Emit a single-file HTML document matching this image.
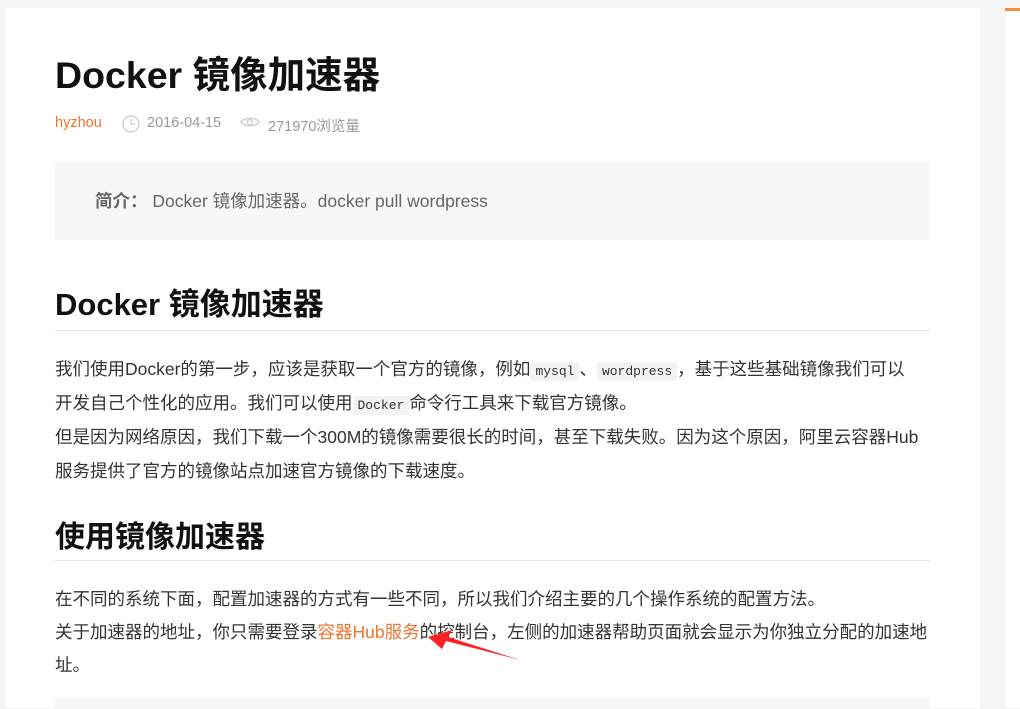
<!DOCTYPE html>
<html><head><meta charset="utf-8"><style>
body{margin:0;width:1020px;height:706px;background:#f5f5f5;overflow:hidden;position:relative;font-family:"Liberation Sans","Noto Sans CJK SC",sans-serif;color:#222}
.card{position:absolute;left:5px;top:8px;width:975px;height:700px;background:#fff}
.side{position:absolute;left:1005px;top:8px;width:15px;height:700px;background:#fff;border-top:3px solid #f08c3c;box-sizing:border-box}
.a{position:absolute;white-space:nowrap}
h1,h2{margin:0;font-weight:bold;color:#111}
.t{font-size:17.5px;color:#333}
code{font-family:"Liberation Mono",monospace;font-size:13px;background:#f3f3f3;padding:2px 5px;border-radius:3px;color:#333}
.rule{position:absolute;left:55px;width:875px;height:1px;background:#e6e6e6}
</style></head><body>
<div class="card"></div><div class="side"></div>
<h1 class="a" style="left:55px;top:44px;font-size:37.5px">Docker 镜像加速器</h1>
<div class="a" style="left:55px;top:115px;font-size:14.5px;color:#999"><span style="color:#f0732e">hyzhou</span>
<svg style="position:absolute;left:67px;top:0" width="18" height="18" viewBox="0 0 18 18"><circle cx="9" cy="9" r="8" fill="none" stroke="#ccc" stroke-width="1.3"/><path d="M9 4v5h4" fill="none" stroke="#ccc" stroke-width="1.3"/></svg>
<span style="position:absolute;left:92px;top:0">2016-04-15</span>
<svg style="position:absolute;left:185px;top:0" width="20" height="14" viewBox="0 0 20 14"><path d="M1 7C4 2 16 2 19 7C16 12 4 12 1 7Z" fill="none" stroke="#ccc" stroke-width="1.3"/><circle cx="10" cy="7" r="2.5" fill="none" stroke="#ccc" stroke-width="1.3"/></svg>
<span style="position:absolute;left:213px;top:0">271970浏览量</span></div>
<div class="a" style="left:55px;top:161px;width:875px;height:79px;background:#f7f7f7"></div>
<div class="a" style="left:95px;top:188px;font-size:17.5px;color:#666"><b>简介：</b> Docker 镜像加速器。docker pull wordpress</div>
<h2 class="a" style="left:55px;top:279px;font-size:31px">Docker 镜像加速器</h2>
<div class="rule" style="top:330px"></div>
<div class="a t" style="left:55px;top:356px">我们使用Docker的第一步，应该是获取一个官方的镜像，例如<code>mysql</code>、<code>wordpress</code>，基于这些基础镜像我们可以</div>
<div class="a t" style="left:55px;top:390px">开发自己个性化的应用。我们可以使用<code>Docker</code>命令行工具来下载官方镜像。</div>
<div class="a t" style="left:55px;top:424px">但是因为网络原因，我们下载一个300M的镜像需要很长的时间，甚至下载失败。因为这个原因，阿里云容器Hub</div>
<div class="a t" style="left:55px;top:458px">服务提供了官方的镜像站点加速官方镜像的下载速度。</div>
<h2 class="a" style="left:55px;top:512px;font-size:30px">使用镜像加速器</h2>
<div class="rule" style="top:560px"></div>
<div class="a t" style="left:55px;top:586px">在不同的系统下面，配置加速器的方式有一些不同，所以我们介绍主要的几个操作系统的配置方法。</div>
<div class="a t" style="left:55px;top:619px">关于加速器的地址，你只需要登录<span style="color:#f0732e">容器Hub服务</span>的控制台，左侧的加速器帮助页面就会显示为你独立分配的加速地</div>
<div class="a t" style="left:55px;top:652px">址。</div>
<svg class="a" style="left:420px;top:625px" width="110" height="40" viewBox="0 0 110 40"><path d="M8 12L32 5L28 12L100 35L26 16L22 24Z" fill="#f22"/></svg>
<div class="a" style="left:55px;top:697px;width:875px;height:12px;background:#f7f7f7"></div>
</body></html>
